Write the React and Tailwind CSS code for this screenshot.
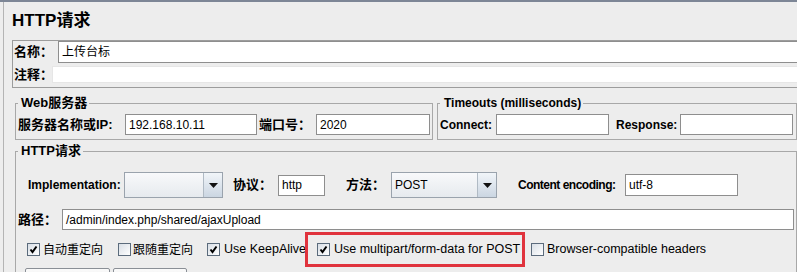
const Box = ({ className = "", children }) => (
  <div className={`flex items-center border border-[#8e8e8e] bg-white px-[3px] text-[12px] font-normal whitespace-nowrap ${className}`}>
    {children}
  </div>
);

const Combo = ({ value, className = "" }) => (
  <div className={`flex h-[26px] border border-[#9aa3ad] bg-linear-to-b from-[#f8f9fb] to-[#e6eaee] ${className}`}>
    <div className="flex flex-1 items-center pl-[3px] text-[12px]">{value}</div>
    <div className="flex w-[19px] items-center justify-center border-l border-[#b0bac4] bg-linear-to-b from-[#f1f5f9] to-[#cbd6e2]">
      <svg width="9" height="5" viewBox="0 0 9 5">
        <path d="M0 0h9L4.5 5z" fill="#111" />
      </svg>
    </div>
  </div>
);

const Check = ({ on }) => (
  <span className="flex h-[13px] w-[13px] shrink-0 items-center justify-center border border-[#5b6b7c] bg-linear-to-br from-[#d9dfe6] to-white">
    {on && (
      <svg width="9" height="9" viewBox="0 0 9 9">
        <path d="M1.5 4.5L3.5 7L7.5 1.5" stroke="#000" strokeWidth="2" fill="none" />
      </svg>
    )}
  </span>
);

const Label = ({ className = "", children }) => (
  <span className={`shrink-0 whitespace-nowrap text-[12px] font-bold ${className}`}>{children}</span>
);

export default function App() {
  return (
    <div className="h-[272px] w-[797px] overflow-hidden border-t-2 border-[#7d8696] bg-[#ededed] font-['Liberation_Sans','Noto_Sans_CJK_SC',sans-serif] text-black">
      <div className="ml-[3px] h-full border-l border-[#b4b4b4] pl-[8px]">
        {/* title */}
        <div className="flex h-[38px] items-center text-[17px] font-bold">HTTP请求</div>

        {/* name / comment */}
        <div className="w-[800px] border border-[#9c9c9c] pb-[4px]">
          <div className="flex h-[22px]">
            <Label className="flex w-[45px] items-center pl-[1px] text-[13px]">名称：</Label>
            <Box className="flex-1">上传台标</Box>
          </div>
          <div className="mt-[3px] flex h-[17px]">
            <Label className="flex w-[39px] items-center pl-[1px] text-[13px]">注释：</Label>
            <div className="flex-1 border border-[#e6e6e6] bg-white" />
          </div>
        </div>

        {/* server + timeouts */}
        <div className="ml-[3px] mt-[7px] flex">
          <fieldset className="w-[418px] border border-[#a8a8a8] pb-[4px] pl-[2px]">
            <legend className="pl-[3px] pr-[2px] text-[13px] font-bold leading-[16px]">Web服务器</legend>
            <div className="mt-[3px] flex h-[21px] items-center">
              <Label className="w-[107px] text-[13px]">服务器名称或IP:</Label>
              <Box className="h-full w-[132px]">192.168.10.11</Box>
              <Label className="ml-[2px] w-[57px] text-[13px]">端口号：</Label>
              <Box className="h-full w-[114px]">2020</Box>
            </div>
          </fieldset>
          <fieldset className="ml-[4px] w-[360px] border border-[#a8a8a8] pb-[4px] pl-[2px]">
            <legend className="pl-[4px] pr-[2px] text-[12px] font-bold leading-[16px]">Timeouts (milliseconds)</legend>
            <div className="mt-[3px] flex h-[21px] items-center">
              <Label className="w-[56px]">Connect:</Label>
              <Box className="h-full w-[113px]" />
              <Label className="ml-[7px] w-[64px]">Response:</Label>
              <Box className="h-full w-[113px]" />
            </div>
          </fieldset>
        </div>

        {/* http request */}
        <fieldset className="ml-[3px] mt-[3px] w-[782px] border border-[#a8a8a8] pl-[2px]">
          <legend className="pl-[3px] pr-[2px] text-[13px] font-bold leading-[16px]">HTTP请求</legend>

          <div className="mt-[13px] flex h-[26px] items-center pl-[10px]">
            <Label className="w-[96px]">Implementation:</Label>
            <Combo className="w-[99px]" />
            <Label className="ml-[10px] w-[45px] text-[13px]">协议：</Label>
            <Box className="h-[21px] w-[47px]">http</Box>
            <Label className="ml-[21px] w-[45px] text-[13px]">方法：</Label>
            <Combo className="w-[106px]" value="POST" />
            <Label className="ml-[21px] w-[107px] tracking-[-0.5px]">Content encoding:</Label>
            <Box className="h-[22px] w-[113px]">utf-8</Box>
          </div>

          <div className="mt-[11px] flex h-[21px] items-center pr-[2px]">
            <Label className="w-[44px] text-[13px]">路径：</Label>
            <Box className="h-full flex-1">/admin/index.php/shared/ajaxUpload</Box>
          </div>

          <div className="mt-[2px] flex h-[35px] items-center pl-[9px] text-[12.5px]">
            <div className="flex w-[91px] items-center gap-[3px]">
              <Check on />
              <span className="text-[12px]">自动重定向</span>
            </div>
            <div className="flex w-[89px] items-center gap-[2px]">
              <Check />
              <span className="text-[12px]">跟随重定向</span>
            </div>
            <div className="flex w-[98px] items-center gap-[4px] whitespace-nowrap">
              <Check on />
              <span>Use KeepAlive</span>
            </div>
            <div className="flex h-full w-[220px] items-center gap-[4px] whitespace-nowrap border-[3px] border-[#e0333d] pl-[9px]">
              <Check on />
              <span>Use multipart/form-data for POST</span>
            </div>
            <div className="ml-[6px] flex items-center gap-[3px] whitespace-nowrap">
              <Check />
              <span>Browser-compatible headers</span>
            </div>
          </div>

          <div className="mt-px flex pl-[7px]">
            <div className="h-[20px] w-[85px] rounded-[2px] border border-[#8a8f96] bg-linear-to-b from-[#fbfbfb] to-[#e3e3e3]" />
            <div className="ml-[3px] h-[20px] w-[74px] rounded-[2px] border border-[#8a8f96] bg-linear-to-b from-[#fbfbfb] to-[#e3e3e3]" />
          </div>
        </fieldset>
      </div>
    </div>
  );
}
